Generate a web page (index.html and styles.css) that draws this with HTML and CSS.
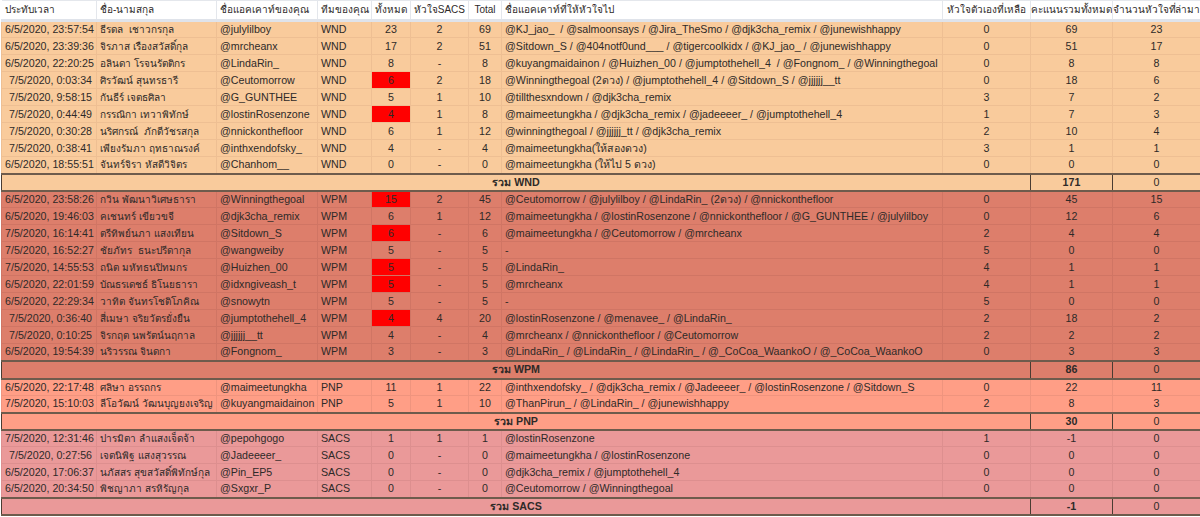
FILE: index.html
```html
<!DOCTYPE html>
<html lang="th">
<head>
<meta charset="utf-8">
<title>คะแนน</title>
<link rel="stylesheet" href="styles.css">
</head>
<body>
<table class="sheet">
<colgroup>
<col class="c1"><col class="c2"><col class="c3"><col class="c4"><col class="c5"><col class="c6"><col class="c7"><col class="c8"><col class="c9"><col class="c10"><col class="c11">
</colgroup>
<thead>
<tr><th>ประทับเวลา</th><th>ชื่อ-นามสกุล</th><th>ชื่อแอคเคาท์ของคุณ</th><th>ทีมของคุณ</th><th class="n">ทั้งหมด</th><th class="n">หัวใจSACS</th><th class="n">Total</th><th>ชื่อแอคเคาท์ที่ให้หัวใจไป</th><th class="n">หัวใจตัวเองที่เหลือ</th><th class="n">คะแนนรวมทั้งหมด</th><th class="n">จำนวนหัวใจที่ล่ามา</th></tr>
</thead>
<tbody class="wnd">
<tr><td class="t">6/5/2020, 23:57:54</td><td class="name">ธีรดล  เชาวกรกุล</td><td>@julylilboy</td><td>WND</td><td class="n">23</td><td class="n">2</td><td class="n">69</td><td>@KJ_jao_  / @salmoonsays / @Jira_TheSmo / @djk3cha_remix / @junewishhappy</td><td class="n">0</td><td class="n">69</td><td class="n">23</td></tr>
<tr><td class="t">6/5/2020, 23:39:36</td><td class="name">จิรภาส เรืองสวัสดิ์กุล</td><td>@mrcheanx</td><td>WND</td><td class="n">17</td><td class="n">2</td><td class="n">51</td><td>@Sitdown_S / @404notf0und___ / @tigercoolkidx / @KJ_jao_ / @junewishhappy</td><td class="n">0</td><td class="n">51</td><td class="n">17</td></tr>
<tr><td class="t">6/5/2020, 22:20:25</td><td class="name">อลินดา โรจนรัตติกร</td><td>@LindaRin_</td><td>WND</td><td class="n">8</td><td class="n">-</td><td class="n">8</td><td>@kuyangmaidainon / @Huizhen_00 / @jumptothehell_4  / @Fongnom_ / @Winningthegoal</td><td class="n">0</td><td class="n">8</td><td class="n">8</td></tr>
<tr><td class="t">7/5/2020, 0:03:34</td><td class="name">ศิรวัฒน์ สุนทรธารี</td><td>@Ceutomorrow</td><td>WND</td><td class="n red">6</td><td class="n">2</td><td class="n">18</td><td>@Winningthegoal (2ดวง) / @jumptothehell_4 / @Sitdown_S / @jjjjjj__tt</td><td class="n">0</td><td class="n">18</td><td class="n">6</td></tr>
<tr><td class="t">7/5/2020, 9:58:15</td><td class="name">กันธีร์ เจตธศิลา</td><td>@G_GUNTHEE</td><td>WND</td><td class="n">5</td><td class="n">1</td><td class="n">10</td><td>@tillthesxndown / @djk3cha_remix</td><td class="n">3</td><td class="n">7</td><td class="n">2</td></tr>
<tr><td class="t">7/5/2020, 0:44:49</td><td class="name">กรรณิกา เทวาพิทักษ์</td><td>@lostinRosenzone</td><td>WND</td><td class="n red">4</td><td class="n">1</td><td class="n">8</td><td>@maimeetungkha / @djk3cha_remix / @jadeeeer_ / @jumptothehell_4</td><td class="n">1</td><td class="n">7</td><td class="n">3</td></tr>
<tr><td class="t">7/5/2020, 0:30:28</td><td class="name">นริศกรณ์  ภักดีวัชรสกุล</td><td>@nnickonthefloor</td><td>WND</td><td class="n">6</td><td class="n">1</td><td class="n">12</td><td>@winningthegoal / @jjjjjj_tt / @djk3cha_remix</td><td class="n">2</td><td class="n">10</td><td class="n">4</td></tr>
<tr><td class="t">7/5/2020, 0:38:41</td><td class="name">เพียงรัมภา ฤทธาณรงค์</td><td>@inthxendofsky_</td><td>WND</td><td class="n">4</td><td class="n">-</td><td class="n">4</td><td>@maimeetungkha(ให้สองดวง)</td><td class="n">3</td><td class="n">1</td><td class="n">1</td></tr>
<tr><td class="t">6/5/2020, 18:55:51</td><td class="name">จันทร์จิรา หัสดีวิจิตร</td><td>@Chanhom__</td><td>WND</td><td class="n">0</td><td class="n">-</td><td class="n">0</td><td>@maimeetungkha (ให้ไป 5 ดวง)</td><td class="n">0</td><td class="n">0</td><td class="n">0</td></tr>
<tr class="sum"><td colspan="9" class="n"><b>รวม WND</b></td><td class="n"><b>171</b></td><td class="n">0</td></tr>
</tbody>
<tbody class="wpm">
<tr><td class="t">6/5/2020, 23:58:26</td><td class="name">กวิน พัฒนาวิเศษธารา</td><td>@Winningthegoal</td><td>WPM</td><td class="n red">15</td><td class="n">2</td><td class="n">45</td><td>@Ceutomorrow / @julylilboy / @LindaRin_ (2ดวง) / @nnickonthefloor</td><td class="n">0</td><td class="n">45</td><td class="n">15</td></tr>
<tr><td class="t">6/5/2020, 19:46:03</td><td class="name">คเชนทร์ เขียวขจี</td><td>@djk3cha_remix</td><td>WPM</td><td class="n">6</td><td class="n">1</td><td class="n">12</td><td>@maimeetungkha / @lostinRosenzone / @nnickonthefloor / @G_GUNTHEE / @julylilboy</td><td class="n">0</td><td class="n">12</td><td class="n">6</td></tr>
<tr><td class="t">7/5/2020, 16:14:41</td><td class="name">ตรีทิพย์นภา แสงเทียน</td><td>@Sitdown_S</td><td>WPM</td><td class="n red">6</td><td class="n">-</td><td class="n">6</td><td>@maimeetungkha / @Ceutomorrow / @mrcheanx</td><td class="n">2</td><td class="n">4</td><td class="n">4</td></tr>
<tr><td class="t">7/5/2020, 16:52:27</td><td class="name">ชัยภัทร  ธนะปรีดากุล</td><td>@wangweiby</td><td>WPM</td><td class="n">5</td><td class="n">-</td><td class="n">5</td><td>-</td><td class="n">5</td><td class="n">0</td><td class="n">0</td></tr>
<tr><td class="t">7/5/2020, 14:55:53</td><td class="name">ถนิต มหัทธนปิทมกร</td><td>@Huizhen_00</td><td>WPM</td><td class="n red">5</td><td class="n">-</td><td class="n">5</td><td>@LindaRin_</td><td class="n">4</td><td class="n">1</td><td class="n">1</td></tr>
<tr><td class="t">6/5/2020, 22:01:59</td><td class="name">บัณธรเดชธ์ ธิโนยธารา</td><td>@idxngiveash_t</td><td>WPM</td><td class="n red">5</td><td class="n">-</td><td class="n">5</td><td>@mrcheanx</td><td class="n">4</td><td class="n">1</td><td class="n">1</td></tr>
<tr><td class="t">6/5/2020, 22:29:34</td><td class="name">วาทิต จันทรโชติโภคิณ</td><td>@snowytn</td><td>WPM</td><td class="n">5</td><td class="n">-</td><td class="n">5</td><td>-</td><td class="n">5</td><td class="n">0</td><td class="n">0</td></tr>
<tr><td class="t">7/5/2020, 0:36:40</td><td class="name">สี่เมษา จริยวัตรยั่งยืน</td><td>@jumptothehell_4</td><td>WPM</td><td class="n red">4</td><td class="n">4</td><td class="n">20</td><td>@lostinRosenzone / @menavee_ / @LindaRin_</td><td class="n">2</td><td class="n">18</td><td class="n">2</td></tr>
<tr><td class="t">7/5/2020, 0:10:25</td><td class="name">จิรกฤต นพรัตน์นฤกาล</td><td>@jjjjjj__tt</td><td>WPM</td><td class="n">4</td><td class="n">-</td><td class="n">4</td><td>@mrcheanx / @nnickonthefloor / @Ceutomorrow</td><td class="n">2</td><td class="n">2</td><td class="n">2</td></tr>
<tr><td class="t">6/5/2020, 19:54:39</td><td class="name">นริวรรณ จินดกา</td><td>@Fongnom_</td><td>WPM</td><td class="n">3</td><td class="n">-</td><td class="n">3</td><td>@LindaRin_ / @LindaRin_ / @LindaRin_ / @_CoCoa_WaankoO / @_CoCoa_WaankoO</td><td class="n">0</td><td class="n">3</td><td class="n">3</td></tr>
<tr class="sum"><td colspan="9" class="n"><b>รวม WPM</b></td><td class="n"><b>86</b></td><td class="n">0</td></tr>
</tbody>
<tbody class="pnp">
<tr><td class="t">6/5/2020, 22:17:48</td><td class="name">ศลิษา อรรถกร</td><td>@maimeetungkha</td><td>PNP</td><td class="n">11</td><td class="n">1</td><td class="n">22</td><td>@inthxendofsky_ / @djk3cha_remix / @Jadeeeer_ / @lostinRosenzone / @Sitdown_S</td><td class="n">0</td><td class="n">22</td><td class="n">11</td></tr>
<tr><td class="t">7/5/2020, 15:10:03</td><td class="name">ลีโอวัฒน์ วัฒนบุญยงเจริญ</td><td>@kuyangmaidainon</td><td>PNP</td><td class="n">5</td><td class="n">1</td><td class="n">10</td><td>@ThanPirun_ / @LindaRin_ / @junewishhappy</td><td class="n">2</td><td class="n">8</td><td class="n">3</td></tr>
<tr class="sum"><td colspan="9" class="n"><b>รวม PNP</b></td><td class="n"><b>30</b></td><td class="n">0</td></tr>
</tbody>
<tbody class="sacs">
<tr><td class="t">7/5/2020, 12:31:46</td><td class="name">ปารมิตา ลำแสงเจ็ดจ้า</td><td>@pepohgogo</td><td>SACS</td><td class="n">1</td><td class="n">1</td><td class="n">1</td><td>@lostinRosenzone</td><td class="n">1</td><td class="n">-1</td><td class="n">0</td></tr>
<tr><td class="t">7/5/2020, 0:27:56</td><td class="name">เจตนิพิฐ แสงสุวรรณ</td><td>@Jadeeeer_</td><td>SACS</td><td class="n">0</td><td class="n">-</td><td class="n">0</td><td>@maimeetungkha / @lostinRosenzone</td><td class="n">0</td><td class="n">0</td><td class="n">0</td></tr>
<tr><td class="t">6/5/2020, 17:06:37</td><td class="name">นภัสสร สุขสวัสดิ์พิทักษ์กุล</td><td>@Pin_EP5</td><td>SACS</td><td class="n">0</td><td class="n">-</td><td class="n">0</td><td>@djk3cha_remix / @jumptothehell_4</td><td class="n">0</td><td class="n">0</td><td class="n">0</td></tr>
<tr><td class="t">6/5/2020, 20:34:50</td><td class="name">พิชญาภา สรหิรัญกุล</td><td>@Sxgxr_P</td><td>SACS</td><td class="n">0</td><td class="n">-</td><td class="n">0</td><td>@Ceutomorrow / @Winningthegoal</td><td class="n">0</td><td class="n">0</td><td class="n">0</td></tr>
<tr class="sum"><td colspan="9" class="n"><b>รวม SACS</b></td><td class="n"><b>-1</b></td><td class="n">0</td></tr>
</tbody>
</table>
</body>
</html>
```

FILE: styles.css
```css
html, body {
  margin: 0;
  padding: 0;
  background: #fff;
  overflow: hidden;
}
.sheet {
  table-layout: fixed;
  border-collapse: collapse;
  width: 1199px;
  margin: 0 0 0 1px;
  font-family: "Liberation Sans", "Noto Sans", sans-serif;
  font-size: 10.67px;
  color: #2e2a28;
}
.c1 { width: 95px; }
.c2 { width: 120px; }
.c3 { width: 101px; }
.c4 { width: 54px; }
.c5 { width: 39px; }
.c6 { width: 58px; }
.c7 { width: 33px; }
.c8 { width: 441px; }
.c9 { width: 88px; }
.c10 { width: 82px; }
.c11 { width: 88px; }
th, td {
  height: 17px;
  padding: 0 3px;
  box-sizing: border-box;
  white-space: pre;
  overflow: hidden;
  text-align: left;
  line-height: 15px;
  font-weight: normal;
}
thead th {
  height: 20px;
  font-size: 10px;
  padding: 0 0 2px 3px;
  background: #fff;
  border-top: 1px solid #e4e7ec;
  border-right: 1px solid #e4e7ec;
  border-bottom: 3px solid #dfe3ea;
}
thead th.n {
  padding-left: 0;
  letter-spacing: -0.06px;
}
td { border: 1px solid var(--line); }
td.t { padding-right: 4px; }
.name { font-size: 10px; }
.n { text-align: center; }
.t { text-align: right; }
.red { background: #ff0000; }
.sum td {
  height: 17px;
  border: 2px solid #6e5b4c;
  border-right-width: 1px;
  border-left-width: 1px;
  border-left-color: #4a3c32;
  border-right-color: #4a3c32;
}
.wpm .sum td { height: 18px; }
b { font-weight: bold; }
.wnd { background: #f9cb9c; --line: #eebf93; }
.wpm { background: #dd7e6b; --line: #d07564; }
.pnp { background: #ff9e86; --line: #ef947e; }
.sacs { background: #ea9999; --line: #dd8f8f; }
```
